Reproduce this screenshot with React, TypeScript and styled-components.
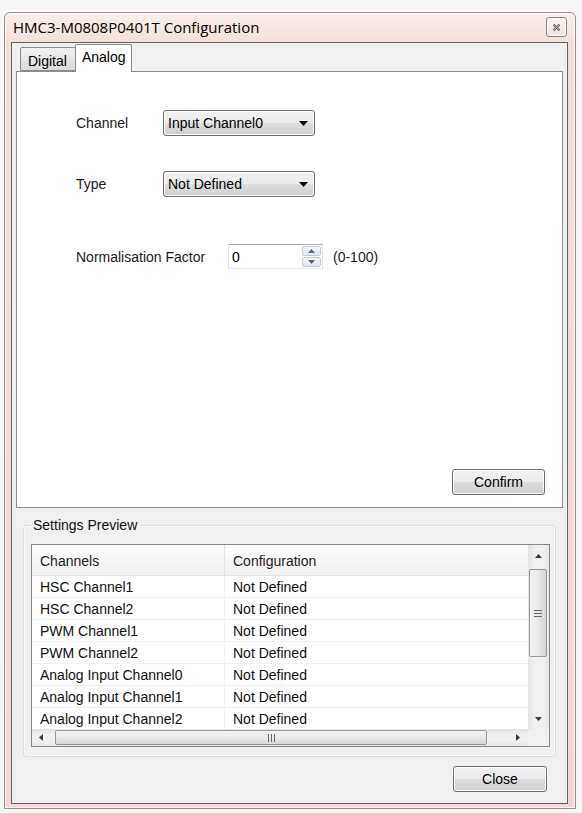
import React from 'react';
import styled, { createGlobalStyle } from 'styled-components';

const GlobalStyle = createGlobalStyle`
  html, body { margin: 0; padding: 0; }
  body {
    background: #f7f6f6;
    font-family: "Liberation Sans", Arial, sans-serif;
    font-size: 14px;
    color: #111;
  }
  * { box-sizing: border-box; }
`;

const Page = styled.div`
  width: 582px;
  height: 813px;
  padding: 12px 6px 4px 4px;
`;

const Window = styled.div`
  height: 100%;
  display: flex;
  flex-direction: column;
  border: 1px solid #978d8b;
  border-radius: 6px 6px 0 0;
  background: linear-gradient(#faeeeb, #f3dfda 30px, #f2d9d4);
  box-shadow: inset 0 0 0 1px rgba(255, 255, 255, 0.7);
  padding: 0 7px 4px 6px;
`;

const TitleBar = styled.div`
  height: 29px;
  flex: none;
  display: flex;
  align-items: center;
  justify-content: space-between;
  padding: 0 1px 1px 2px;
`;

const TitleText = styled.span`
  font-family: "Open Sans", "Noto Sans", sans-serif;
  font-size: 15px;
  color: #000;
`;

const CaptionButton = styled.div`
  width: 21px;
  height: 20px;
  border: 1px solid #8a8282;
  border-radius: 3px;
  background: linear-gradient(#fdf7f6, #efe2df);
  box-shadow: inset 0 0 0 1px rgba(255, 255, 255, 0.85);
  display: flex;
  align-items: center;
  justify-content: center;
`;

const Client = styled.div`
  flex: 1;
  display: flex;
  flex-direction: column;
  border: 1px solid #646464;
  background: #f0f0f0;
  padding: 0 4px;
`;

const TabStrip = styled.div`
  height: 28px;
  flex: none;
  display: flex;
  align-items: flex-end;
  padding-left: 4px;
`;

const Tab = styled.div<{ $active?: boolean }>`
  height: ${(p) => (p.$active ? 28 : 24)}px;
  padding: ${(p) => (p.$active ? '4px 5px 0 6px' : '5px 8px 0 7px')};
  margin-left: ${(p) => (p.$active ? '-1px' : '0')};
  margin-bottom: ${(p) => (p.$active ? '-1px' : '0')};
  position: relative;
  z-index: ${(p) => (p.$active ? 1 : 0)};
  border: 1px solid #898c95;
  border-bottom: ${(p) => (p.$active ? 'none' : '1px solid #898c95')};
  border-radius: 2px 2px 0 0;
  background: ${(p) => (p.$active ? '#ffffff' : 'linear-gradient(#f3f3f3, #e6e6e6 50%, #d9d9d9)')};
  font-size: 14px;
  color: #000;
  white-space: nowrap;
`;

const Panel = styled.div`
  height: 437px;
  flex: none;
  border: 1px solid #898c95;
  background: #ffffff;
  display: flex;
  flex-direction: column;
  padding: 38px 17px 12px 59px;
`;

const FieldRow = styled.div<{ $labelWidth: number; $gap: number }>`
  display: grid;
  grid-template-columns: ${(p) => p.$labelWidth}px auto auto;
  justify-content: start;
  align-items: center;
  margin-top: ${(p) => p.$gap}px;
`;

const Label = styled.span`
  font-size: 14px;
  color: #1a1a1a;
`;

const Hint = styled.span`
  font-size: 14px;
  color: #1a1a1a;
  margin-left: 10px;
`;

const Select = styled.div`
  width: 152px;
  height: 26px;
  border: 1px solid #707070;
  border-radius: 3px;
  background: linear-gradient(#f2f2f2 0%, #ebebeb 50%, #dddddd 50%, #cfcfcf 100%);
  box-shadow: inset 0 0 0 1px rgba(255, 255, 255, 0.8);
  display: flex;
  align-items: center;
  justify-content: space-between;
  padding: 0 6px 0 4px;
  font-size: 14px;
  color: #000;
`;

const SpinBox = styled.div`
  width: 95px;
  height: 25px;
  border: 1px solid;
  border-color: #abadb3 #dbdfe6 #e3e9ef #e2e3ea;
  background: #fff;
  display: flex;
  align-items: stretch;
  padding: 1px 1px 1px 3px;
`;

const SpinValue = styled.span`
  flex: 1;
  display: flex;
  align-items: center;
  font-size: 14px;
  color: #000;
`;

const SpinButtons = styled.div`
  width: 19px;
  display: flex;
  flex-direction: column;
  gap: 1px;
`;

const SpinButton = styled.div`
  flex: 1;
  border: 1px solid #c5ccd6;
  border-radius: 2px;
  background: linear-gradient(#f5f7f9, #e2e8ef);
  display: flex;
  align-items: center;
  justify-content: center;
`;

const Spacer = styled.div`
  flex: 1;
`;

const Button = styled.div<{ $w: number }>`
  width: ${(p) => p.$w}px;
  height: 26px;
  flex: none;
  align-self: flex-end;
  border: 1px solid #707070;
  border-radius: 3px;
  background: linear-gradient(#f2f2f2 0%, #ebebeb 50%, #dddddd 50%, #cfcfcf 100%);
  box-shadow: inset 0 0 0 1px rgba(255, 255, 255, 0.85);
  display: flex;
  align-items: center;
  justify-content: center;
  font-size: 14px;
  color: #000;
`;

const GroupBox = styled.fieldset`
  margin: 9px 7px 0 7px;
  padding: 11px 5px 9px 7px;
  border: 1px solid #d5dfe5;
  border-radius: 3px;
  box-shadow: inset 0 0 0 1px #fbfbfb;
  min-width: 0;
  flex: none;
`;

const Legend = styled.legend`
  padding: 0 2px;
  font-size: 14px;
  line-height: 16px;
  color: #111;
`;

const ListView = styled.div`
  height: 203px;
  border: 1px solid #828790;
  background: #fff;
  display: grid;
  grid-template-columns: 1fr 21px;
  grid-template-rows: 1fr 17px;
`;

const TableArea = styled.div`
  overflow: hidden;
`;

const HeaderRow = styled.div`
  display: grid;
  grid-template-columns: 193px 1fr;
  height: 31px;
  background: linear-gradient(#ffffff, #f7f7f7 40%, #f1f1f1);
  border-bottom: 1px solid #e2e2e2;
`;

const HeaderCell = styled.div<{ $divider?: boolean }>`
  display: flex;
  align-items: center;
  padding: 2px 0 0 8px;
  border-right: ${(p) => (p.$divider ? '1px solid #e3e3e3' : 'none')};
  font-size: 14px;
  color: #1e1e1e;
`;

const Row = styled.div`
  display: grid;
  grid-template-columns: 193px 1fr;
  height: 22px;
  border-bottom: 1px solid #f0f0f0;
`;

const Cell = styled.div<{ $divider?: boolean }>`
  display: flex;
  align-items: center;
  padding: 1px 0 0 8px;
  border-right: ${(p) => (p.$divider ? '1px solid #f2f2f2' : 'none')};
  font-size: 14px;
  color: #111;
  white-space: nowrap;
`;

const VScroll = styled.div`
  display: flex;
  flex-direction: column;
  background: linear-gradient(to right, #e3e3e3, #f0f0f0 30%, #f0f0f0 70%, #e6e6e6);
`;

const HScroll = styled.div`
  display: flex;
  align-items: stretch;
  background: linear-gradient(#e3e3e3, #f0f0f0 30%, #f0f0f0 70%, #e6e6e6);
`;

const ArrowBox = styled.div<{ $size: number; $vertical?: boolean }>`
  flex: none;
  width: ${(p) => (p.$vertical ? 'auto' : `${p.$size}px`)};
  height: ${(p) => (p.$vertical ? `${p.$size}px` : 'auto')};
  display: flex;
  align-items: center;
  justify-content: center;
`;

const VThumb = styled.div`
  height: 88px;
  margin: 3px 2px 0 1px;
  border: 1px solid #979797;
  border-radius: 2px;
  background: linear-gradient(to right, #f4f4f4, #e8e8e8 50%, #d6d6d6);
  display: flex;
  align-items: center;
  justify-content: center;
`;

const HThumb = styled.div`
  width: 432px;
  margin: 1px 0 1px 6px;
  border: 1px solid #979797;
  border-radius: 2px;
  background: linear-gradient(#f4f4f4, #e8e8e8 50%, #d6d6d6);
  display: flex;
  align-items: center;
  justify-content: center;
`;

const Corner = styled.div`
  background: #f0f0f0;
`;

const BottomBar = styled.div`
  display: flex;
  justify-content: flex-end;
  padding: 9px 16px 0 0;
`;

const Triangle = ({ dir, color = '#000', w = 9, h = 5 }: { dir: 'up' | 'down' | 'left' | 'right'; color?: string; w?: number; h?: number }) => {
  const vertical = dir === 'up' || dir === 'down';
  const W = vertical ? w : h;
  const H = vertical ? h : w;
  let pts = '';
  if (dir === 'down') pts = `0,0 ${W},0 ${W / 2},${H}`;
  if (dir === 'up') pts = `0,${H} ${W},${H} ${W / 2},0`;
  if (dir === 'left') pts = `${W},0 ${W},${H} 0,${H / 2}`;
  if (dir === 'right') pts = `0,0 0,${H} ${W},${H / 2}`;
  return (
    <svg width={W} height={H} viewBox={`0 0 ${W} ${H}`}>
      <polygon points={pts} fill={color} />
    </svg>
  );
};

const rows = [
  'HSC Channel1',
  'HSC Channel2',
  'PWM Channel1',
  'PWM Channel2',
  'Analog Input Channel0',
  'Analog Input Channel1',
  'Analog Input Channel2',
];

export default function App() {
  return (
    <>
      <GlobalStyle />
      <Page>
        <Window>
          <TitleBar>
            <TitleText>HMC3-M0808P0401T Configuration</TitleText>
            <CaptionButton>
              <svg width="9" height="9" viewBox="0 0 9 9">
                <path d="M1.5 1.5 L7.5 7.5 M7.5 1.5 L1.5 7.5" stroke="#5a5a5a" strokeWidth="2" fill="none" />
                <path d="M1.5 1.5 L7.5 7.5 M7.5 1.5 L1.5 7.5" stroke="#e8e8e8" strokeWidth="0.6" fill="none" />
              </svg>
            </CaptionButton>
          </TitleBar>
          <Client>
            <TabStrip>
              <Tab>Digital</Tab>
              <Tab $active>Analog</Tab>
            </TabStrip>
            <Panel>
              <FieldRow $labelWidth={87} $gap={0}>
                <Label>Channel</Label>
                <Select>
                  <span>Input Channel0</span>
                  <Triangle dir="down" w={9} h={5} />
                </Select>
              </FieldRow>
              <FieldRow $labelWidth={87} $gap={35}>
                <Label>Type</Label>
                <Select>
                  <span>Not Defined</span>
                  <Triangle dir="down" w={9} h={5} />
                </Select>
              </FieldRow>
              <FieldRow $labelWidth={152} $gap={47}>
                <Label>Normalisation Factor</Label>
                <SpinBox>
                  <SpinValue>0</SpinValue>
                  <SpinButtons>
                    <SpinButton>
                      <Triangle dir="up" color="#4e6a8a" w={7} h={4} />
                    </SpinButton>
                    <SpinButton>
                      <Triangle dir="down" color="#4e6a8a" w={7} h={4} />
                    </SpinButton>
                  </SpinButtons>
                </SpinBox>
                <Hint>(0-100)</Hint>
              </FieldRow>
              <Spacer />
              <Button $w={93}>Confirm</Button>
            </Panel>
            <GroupBox>
              <Legend>Settings Preview</Legend>
              <ListView>
                <TableArea>
                  <HeaderRow>
                    <HeaderCell $divider>Channels</HeaderCell>
                    <HeaderCell>Configuration</HeaderCell>
                  </HeaderRow>
                  {rows.map((r) => (
                    <Row key={r}>
                      <Cell $divider>{r}</Cell>
                      <Cell>Not Defined</Cell>
                    </Row>
                  ))}
                </TableArea>
                <VScroll>
                  <ArrowBox $vertical $size={21}>
                    <Triangle dir="up" color="#3c3c3c" w={7} h={4} />
                  </ArrowBox>
                  <VThumb>
                    <svg width="8" height="7" viewBox="0 0 8 7">
                      <path d="M0 0.5 H8 M0 3.5 H8 M0 6.5 H8" stroke="#6a6a6a" strokeWidth="1" />
                    </svg>
                  </VThumb>
                  <Spacer />
                  <ArrowBox $vertical $size={21}>
                    <Triangle dir="down" color="#3c3c3c" w={7} h={4} />
                  </ArrowBox>
                </VScroll>
                <HScroll>
                  <ArrowBox $size={17}>
                    <Triangle dir="left" color="#3c3c3c" w={7} h={4} />
                  </ArrowBox>
                  <HThumb>
                    <svg width="7" height="8" viewBox="0 0 7 8">
                      <path d="M0.5 0 V8 M3.5 0 V8 M6.5 0 V8" stroke="#6a6a6a" strokeWidth="1" />
                    </svg>
                  </HThumb>
                  <Spacer />
                  <ArrowBox $size={20}>
                    <Triangle dir="right" color="#3c3c3c" w={7} h={4} />
                  </ArrowBox>
                </HScroll>
                <Corner />
              </ListView>
            </GroupBox>
            <BottomBar>
              <Button $w={94}>Close</Button>
            </BottomBar>
          </Client>
        </Window>
      </Page>
    </>
  );
}
